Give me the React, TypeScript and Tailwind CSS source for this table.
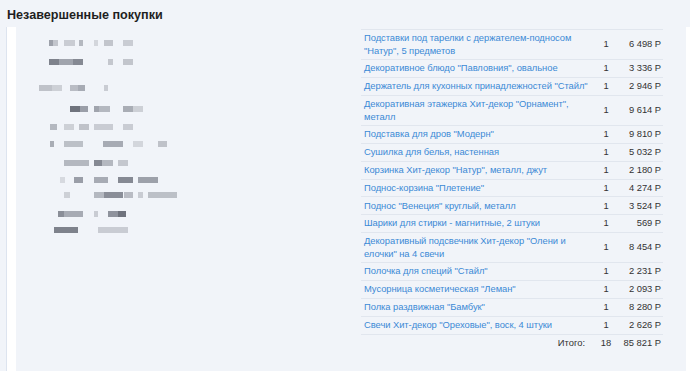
const items: { name: string; qty: number; price: string }[] = [
  { name: 'Подставки под тарелки с держателем-подносом "Натур", 5 предметов', qty: 1, price: "6 498 Р" },
  { name: 'Декоративное блюдо "Павловния", овальное', qty: 1, price: "3 336 Р" },
  { name: 'Держатель для кухонных принадлежностей "Стайл"', qty: 1, price: "2 946 Р" },
  { name: 'Декоративная этажерка Хит-декор "Орнамент", металл', qty: 1, price: "9 614 Р" },
  { name: 'Подставка для дров "Модерн"', qty: 1, price: "9 810 Р" },
  { name: "Сушилка для белья, настенная", qty: 1, price: "5 032 Р" },
  { name: 'Корзинка Хит-декор "Натур", металл, джут', qty: 1, price: "2 180 Р" },
  { name: 'Поднос-корзина "Плетение"', qty: 1, price: "4 274 Р" },
  { name: 'Поднос "Венеция" круглый, металл', qty: 1, price: "3 524 Р" },
  { name: "Шарики для стирки - магнитные, 2 штуки", qty: 1, price: "569 Р" },
  { name: 'Декоративный подсвечник Хит-декор "Олени и елочки" на 4 свечи', qty: 1, price: "8 454 Р" },
  { name: 'Полочка для специй "Стайл"', qty: 1, price: "2 231 Р" },
  { name: 'Мусорница косметическая "Леман"', qty: 1, price: "2 093 Р" },
  { name: 'Полка раздвижная "Бамбук"', qty: 1, price: "8 280 Р" },
  { name: 'Свечи Хит-декор "Ореховые", воск, 4 штуки', qty: 1, price: "2 626 Р" },
];

// blurred (pixelated) customer details: [y, x, width, shade]
const mosaic: [number, number, number, string][] = [
  [13, 33, 4, "#9da1aa"], [13, 37, 5, "#c2c5cc"], [13, 48, 11, "#c9ccd3"], [13, 63, 4, "#b4b8c0"], [13, 78, 4, "#d3d6dc"], [13, 88, 9, "#c2c5cc"], [13, 107, 10, "#c9ccd3"],
  [32, 33, 10, "#7e828c"], [32, 43, 14, "#a0a4ad"], [32, 57, 10, "#858993"], [32, 92, 5, "#c4c7ce"], [32, 107, 10, "#c2c5cc"],
  [58, 23, 13, "#bfc2c9"], [58, 36, 10, "#cdd0d6"], [58, 54, 8, "#b9bcc4"], [58, 62, 7, "#a7abb4"], [58, 88, 4, "#c9ccd3"],
  [79, 54, 10, "#6f737d"], [79, 64, 8, "#9a9ea8"], [79, 78, 5, "#a0a4ad"], [79, 83, 11, "#b4b8c0"], [79, 107, 10, "#a9adb5"], [79, 117, 10, "#cdd0d6"],
  [97, 34, 7, "#b4b8c0"], [97, 48, 10, "#cdd0d6"], [97, 63, 10, "#bfc2c9"], [97, 78, 19, "#c9ccd3"], [97, 107, 10, "#c9ccd3"],
  [114, 34, 4, "#a9adb5"], [114, 48, 19, "#bcc0c7"], [114, 87, 20, "#a7abb4"], [114, 117, 10, "#d3d6dc"], [114, 142, 9, "#bfc2c9"],
  [133, 48, 25, "#b4b8c0"], [133, 78, 8, "#858993"], [133, 86, 11, "#b4b8c0"], [133, 102, 10, "#c4c7ce"],
  [150, 44, 5, "#d6d9df"], [150, 58, 9, "#9a9ea8"], [150, 78, 14, "#a7abb4"], [150, 102, 15, "#858993"], [150, 122, 20, "#9da1aa"],
  [165, 48, 6, "#cdd0d6"], [165, 78, 10, "#b4b8c0"], [165, 88, 19, "#8a8e98"], [165, 108, 9, "#b9bcc4"], [165, 122, 5, "#c9ccd3"], [165, 132, 29, "#bcc0c7"],
  [184, 42, 6, "#8a8e98"], [184, 48, 19, "#a7abb4"], [184, 78, 4, "#c9ccd3"], [184, 92, 10, "#8f939d"], [184, 102, 8, "#6f737d"],
  [200, 38, 24, "#7e828c"], [200, 82, 30, "#c9ccd3"],
];

function Mosaic() {
  return (
    <svg width="200" height="220" viewBox="0 0 200 220" className="block">
      {mosaic.map(([y, x, w, c], i) => (
        <rect key={i} x={x} y={y} width={w} height={6} fill={c} />
      ))}
    </svg>
  );
}

export default function App() {
  return (
    <div
      className="w-[690px] h-[371px] overflow-hidden bg-[#f1f4f9] flex flex-col text-[#333]"
      style={{ fontFamily: '"Liberation Sans", Arial, sans-serif' }}
    >
      <h2 className="px-[7px] pt-[7px] h-[27px] text-[12.6px] leading-[16px] font-bold text-[#1f1f1f]">
        Незавершенные покупки
      </h2>
      <div className="flex-1 ml-[6px] border-l border-[#dde4ef] bg-white pl-[9px] pr-[4px] flex">
        <div className="flex-1 bg-[#f1f4f9] flex">
          <div className="w-[345px]">
            <Mosaic />
          </div>
          <div className="w-[302px] pt-[2px]">
            <div className="border-t border-[#e1e6ee]">
              {items.map((it, i) => (
                <div
                  key={i}
                  className="flex items-center border-b border-[#e1e6ee] py-[2.1px] text-[9.4px] leading-[12.6px] tracking-[-0.05px]"
                >
                  <div className="flex-1 pl-[3px] pr-[2px] text-[#3c8ad6]">{it.name}</div>
                  <div className="w-[22px] text-center">{it.qty}</div>
                  <div className="w-[46px] text-right pr-[2px]">{it.price}</div>
                </div>
              ))}
              <div className="flex items-center py-[2.1px] text-[9.4px] leading-[12.6px]">
                <div className="flex-1 text-right pr-[10px]">Итого:</div>
                <div className="w-[22px] text-center">18</div>
                <div className="w-[46px] text-right pr-[2px]">85 821 Р</div>
              </div>
            </div>
          </div>
        </div>
      </div>
    </div>
  );
}
